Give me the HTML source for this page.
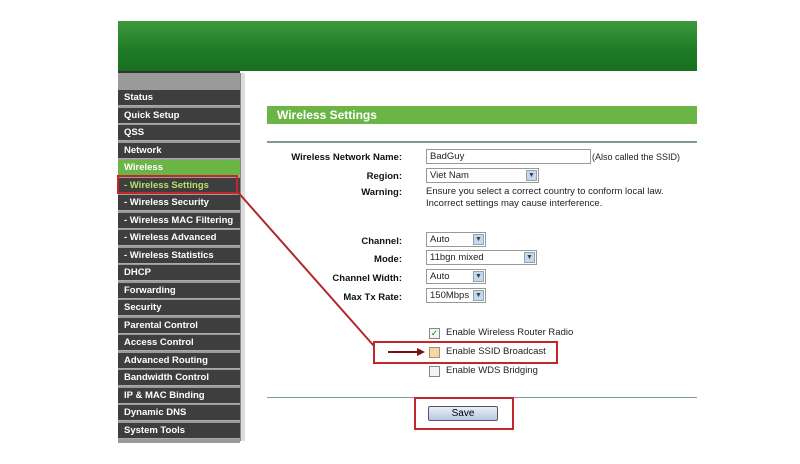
<!DOCTYPE html><html><head><style>
body{margin:0;width:800px;height:464px;background:#fff;position:relative;overflow:hidden;font-family:"Liberation Sans",Arial,sans-serif}
.a{position:absolute}
.hdr{left:118px;top:21px;width:579px;height:50px;background:linear-gradient(#3d9a3d,#1f7a26 60%,#17701f)}
.side{left:118px;top:71px;width:122px;height:370px;background:#9a9a9a;border-top:2px solid #333}
.it{position:absolute;left:0;width:122px;height:16px;background:#3e3e3e;color:#fff;font-size:9.5px;font-weight:bold;line-height:16px;padding-left:6px;box-sizing:border-box;border-bottom:1.5px solid #aaa}
.sep{left:240px;top:73px;width:4px;height:368px;background:#ddd;border-left:1px solid #888}
.lbl{position:absolute;right:398px;font-size:9.5px;font-weight:bold;color:#111;text-align:right}
.txt{position:absolute;font-size:9.5px;color:#222}
.inp{position:absolute;border:1px solid #999;height:13px;font-size:9.5px;line-height:13px;padding-left:3px;box-sizing:content-box;background:#fff;color:#222}
.dd{position:absolute;right:1px;top:1px;width:11px;height:11px;background:#c8d6ee;border:1px solid #8aa;box-sizing:border-box;font-size:7px;line-height:10px;text-align:center;color:#345}
.cb{position:absolute;width:9px;height:9px;border:1px solid #888;background:#f4f4f4}
.red{position:absolute;border:2px solid #c2272d}
</style></head><body>
<div class="a hdr"></div>
<div class="a side">
<div class="it" style="top:17px">Status</div>
<div class="it" style="top:34.5px">Quick Setup</div>
<div class="it" style="top:52px">QSS</div>
<div class="it" style="top:69.5px">Network</div>
<div class="it" style="top:87px;background:#6ab545">Wireless</div>
<div class="it" style="top:104.5px;color:#b5e06a">- Wireless Settings</div>
<div class="it" style="top:122px">- Wireless Security</div>
<div class="it" style="top:139.5px">- Wireless MAC Filtering</div>
<div class="it" style="top:157px">- Wireless Advanced</div>
<div class="it" style="top:174.5px">- Wireless Statistics</div>
<div class="it" style="top:192px">DHCP</div>
<div class="it" style="top:209.5px">Forwarding</div>
<div class="it" style="top:227px">Security</div>
<div class="it" style="top:244.5px">Parental Control</div>
<div class="it" style="top:262px">Access Control</div>
<div class="it" style="top:279.5px">Advanced Routing</div>
<div class="it" style="top:297px">Bandwidth Control</div>
<div class="it" style="top:314.5px">IP &amp; MAC Binding</div>
<div class="it" style="top:332px">Dynamic DNS</div>
<div class="it" style="top:349.5px">System Tools</div>
</div>
<div class="a sep"></div>
<div class="a" style="left:267px;top:106px;width:430px;height:18px;background:#6ab545;color:#fff;font-weight:bold;font-size:12px;line-height:18px;padding-left:10px;box-sizing:border-box">Wireless Settings</div>
<div class="a" style="left:267px;top:141px;width:430px;height:2px;background:#7f9a8f"></div>
<div class="lbl" style="top:152px">Wireless Network Name:</div>
<div class="inp" style="left:426px;top:149px;width:160px">BadGuy</div>
<div class="txt" style="left:592px;top:152px;font-size:9px">(Also called the SSID)</div>
<div class="lbl" style="top:171px">Region:</div>
<div class="inp" style="left:426px;top:168px;width:108px">Viet Nam<div class="dd">&#9660;</div></div>
<div class="lbl" style="top:187px">Warning:</div>
<div class="txt" style="left:426px;top:186px;line-height:12px">Ensure you select a correct country to conform local law.<br>Incorrect settings may cause interference.</div>
<div class="lbl" style="top:236px">Channel:</div>
<div class="inp" style="left:426px;top:232px;width:55px">Auto<div class="dd">&#9660;</div></div>
<div class="lbl" style="top:254px">Mode:</div>
<div class="inp" style="left:426px;top:250px;width:106px">11bgn mixed<div class="dd">&#9660;</div></div>
<div class="lbl" style="top:273px">Channel Width:</div>
<div class="inp" style="left:426px;top:269px;width:55px">Auto<div class="dd">&#9660;</div></div>
<div class="lbl" style="top:292px">Max Tx Rate:</div>
<div class="inp" style="left:426px;top:288px;width:55px">150Mbps<div class="dd">&#9660;</div></div>
<div class="cb" style="left:429px;top:328px;color:#2a8a2a;font-size:9px;line-height:9px;text-align:center">&#10003;</div>
<div class="txt" style="left:446px;top:327px">Enable Wireless Router Radio</div>
<div class="cb" style="left:429px;top:347px;background:#f0d8a8;border-color:#b09060"></div>
<div class="txt" style="left:446px;top:346px">Enable SSID Broadcast</div>
<div class="cb" style="left:429px;top:366px"></div>
<div class="txt" style="left:446px;top:365px">Enable WDS Bridging</div>
<div class="a" style="left:267px;top:397px;width:430px;height:1px;background:#7f9a8f"></div>
<div class="a" style="left:428px;top:406px;width:68px;height:13px;border:1px solid #556;border-radius:2px;background:linear-gradient(#e8eef8,#b8c8e0);font-size:10px;text-align:center;line-height:13px">Save</div>
<div class="red" style="left:117px;top:175px;width:117px;height:15px"></div>
<div class="red" style="left:373px;top:341px;width:181px;height:19px"></div>
<div class="red" style="left:414px;top:397px;width:96px;height:29px"></div>
<svg class="a" style="left:0;top:0" width="800" height="464"><line x1="236" y1="190" x2="374" y2="346" stroke="#b0282d" stroke-width="2"/><line x1="388" y1="352" x2="418" y2="352" stroke="#7a1010" stroke-width="2"/><polygon points="417,348 425,352 417,356" fill="#7a1010"/></svg>
</body></html>
